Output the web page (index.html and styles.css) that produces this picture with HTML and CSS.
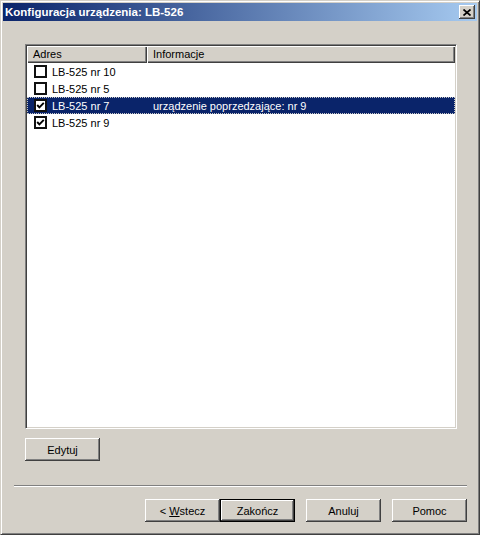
FILE: index.html
```html
<!DOCTYPE html>
<html lang="pl">
<head>
    <meta charset="UTF-8">
    <title>Konfiguracja urządzenia: LB-526</title>
    <link rel="stylesheet" href="styles.css">
</head>
<body>
    <div class="window">
        <div class="titlebar">
            <span class="title">Konfiguracja urządzenia: LB-526</span>
            <span class="close">
                <svg width="8" height="7" viewBox="0 0 8 7">
                    <path d="M0.5 0.5 L7.5 6.5 M7.5 0.5 L0.5 6.5" stroke="#000" stroke-width="1.7" fill="none"/>
                </svg>
            </span>
        </div>

        <div class="content">
            <div class="listview">
                <div class="lv-header">
                    <div class="lv-col col-addr">Adres</div>
                    <div class="lv-col col-info">Informacje</div>
                </div>
                <div class="lv-row">
                    <span class="cell-addr"><span class="check"></span>LB-525 nr 10</span>
                    <span class="cell-info"></span>
                </div>
                <div class="lv-row">
                    <span class="cell-addr"><span class="check"></span>LB-525 nr 5</span>
                    <span class="cell-info"></span>
                </div>
                <div class="lv-row selected">
                    <span class="cell-addr"><span class="check checked"><svg width="9" height="9" viewBox="0 0 9 9"><polyline points="1.2,4 3.4,6.4 7.8,1.8" stroke="#000" stroke-width="1.9" fill="none"/></svg></span>LB-525 nr 7</span>
                    <span class="cell-info">urządzenie poprzedzające: nr 9</span>
                </div>
                <div class="lv-row">
                    <span class="cell-addr"><span class="check checked"><svg width="9" height="9" viewBox="0 0 9 9"><polyline points="1.2,4 3.4,6.4 7.8,1.8" stroke="#000" stroke-width="1.9" fill="none"/></svg></span>LB-525 nr 9</span>
                    <span class="cell-info"></span>
                </div>
            </div>

            <button type="button" class="btn btn-edit">Edytuj</button>
        </div>

        <div class="separator"></div>

        <div class="buttons">
            <button type="button" class="btn">&lt; <u>W</u>stecz</button>
            <button type="button" class="btn btn-default">Zakończ</button>
            <button type="button" class="btn">Anuluj</button>
            <button type="button" class="btn">Pomoc</button>
        </div>
    </div>
</body>
</html>
```

FILE: styles.css
```css
body {
    margin: 0;
    font-family: "Liberation Sans", Arial, sans-serif;
    font-size: 11px;
    color: #000;
    background-color: #d4d0c8;
}

.window {
    width: 480px;
    height: 535px;
    box-sizing: border-box;
    padding: 2px;
    background-color: #d4d0c8;
    border: 1px solid;
    border-color: #d4d0c8 #404040 #404040 #d4d0c8;
    box-shadow: inset 1px 1px #fff, inset -1px -1px #808080;
}

/* title bar */
.titlebar {
    height: 18px;
    display: flex;
    align-items: center;
    justify-content: space-between;
    padding: 0 2px 0 2px;
    background: linear-gradient(to right, #0a246a, #a6caf0);
}

.title {
    color: #fff;
    font-weight: bold;
    font-size: 11.5px;
}

.close {
    width: 16px;
    height: 14px;
    display: flex;
    align-items: center;
    justify-content: center;
    background-color: #d4d0c8;
    box-shadow: inset -1px -1px #404040, inset 1px 1px #fff, inset -2px -2px #808080;
}

.content {
    padding: 23px 20px 0 22px;
}

/* list view */
.listview {
    height: 385px;
    box-sizing: border-box;
    padding: 1px;
    background-color: #fff;
    border: 1px solid;
    border-color: #808080 #fff #fff #808080;
    box-shadow: inset 1px 1px #404040, inset -1px -1px #d4d0c8;
}

.lv-header {
    display: flex;
    height: 17px;
}

.lv-col {
    box-sizing: border-box;
    padding-left: 6px;
    line-height: 17px;
    background-color: #d4d0c8;
    box-shadow: inset 1px 1px #fff, inset -1px -1px #404040, inset -2px -2px #808080;
}

.col-addr {
    width: 120px;
}

.col-info {
    flex: 1;
}

.lv-row {
    display: flex;
    align-items: center;
    height: 17px;
}

.cell-addr {
    width: 120px;
    display: flex;
    align-items: center;
    padding-left: 7px;
    box-sizing: border-box;
}

.cell-info {
    flex: 1;
    padding-left: 6px;
}

.check {
    width: 13px;
    height: 13px;
    box-sizing: border-box;
    margin-right: 5px;
    border: 2px solid #111;
    background-color: #fff;
    display: flex;
    align-items: center;
    justify-content: center;
}

.selected {
    background-color: #0a246a;
    color: #fff;
    outline: 1px dotted #c8c8c8;
    outline-offset: -1px;
}

/* buttons */
.btn {
    width: 75px;
    height: 23px;
    box-sizing: border-box;
    padding: 0;
    font-family: "Liberation Sans", Arial, sans-serif;
    font-size: 11px;
    color: #000;
    background-color: #d4d0c8;
    border: none;
    box-shadow: inset -1px -1px #404040, inset 1px 1px #fff, inset -2px -2px #808080;
}

.btn-edit {
    display: block;
    margin-top: 9px;
}

.btn-default {
    border: 1px solid #000;
}

.separator {
    margin: 24px 10px 0 11px;
    border-top: 1px solid #808080;
    border-bottom: 1px solid #fff;
}

.buttons {
    display: flex;
    justify-content: flex-end;
    gap: 11px;
    margin-top: 12px;
    padding-right: 10px;
}

.buttons .btn:first-child {
    margin-right: -11px;
}
```
